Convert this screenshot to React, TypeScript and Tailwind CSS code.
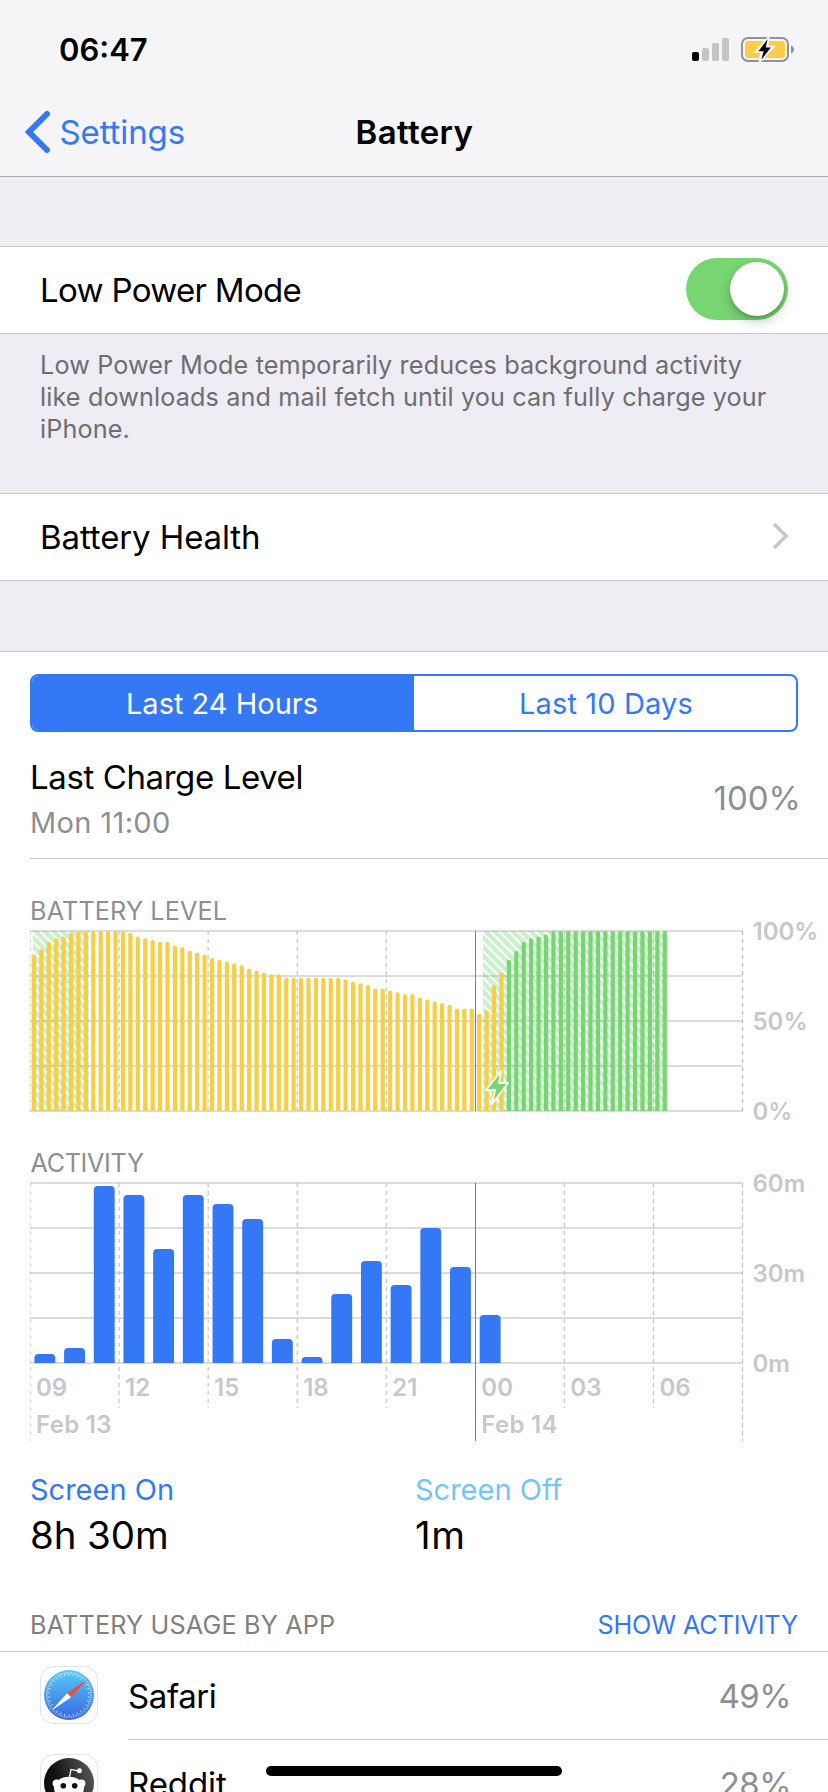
import type { ReactNode } from "react"

// one entry per 15 minutes, starting at 09:00
const levels = [
  87, 90, 94, 96, 97, 99, 100, 100, 100, 100, 100, 100, 100, 99, 97, 96, 95, 94, 94, 92, 91, 89, 88, 87, 85, 84, 83, 82,
  81, 79, 78, 77, 76, 76, 74, 74, 74, 74, 74, 74, 74, 74, 73, 72, 71, 70, 68, 68, 67, 66, 65, 65, 63, 62, 61, 60, 59, 57,
  57, 57, 54, 56, 70, 77, 84, 89, 94, 96, 97, 98, 100, 100, 100, 100, 100, 100, 100, 100, 100, 100, 100, 100, 100, 100,
  100, 100,
]
const LOW_POWER_END = 64

// minutes of use per hour, starting at 09:00
const activity = [3, 5, 59, 56, 38, 56, 53, 48, 8, 2, 23, 34, 26, 45, 32, 16]

const hours = ["09", "12", "15", "18", "21", "00", "03", "06"]
const STEP = 89.06
const MIDNIGHT = 5

const columns = [0, 1, 2, 3, 4, 5, 6, 7, 8]
const rows = [0, 1, 2, 3, 4]

const apps = [
  { name: "Safari", usage: "49%", icon: <SafariIcon />, tracking: "tracking-[-0.4px]" },
  { name: "Reddit", usage: "28%", icon: <RedditIcon />, tracking: "tracking-[-0.1px]" },
]

function SignalIcon() {
  return (
    <svg width="38" height="24" viewBox="0 0 38 24">
      <rect x="0" y="14" width="7" height="9" rx="2" fill="#000" />
      <rect x="10" y="10" width="7" height="13" rx="2" fill="#c4c4c4" />
      <rect x="20" y="5" width="7" height="18" rx="2" fill="#c4c4c4" />
      <rect x="30" y="0" width="7" height="23" rx="2" fill="#c4c4c4" />
    </svg>
  )
}

function ChargingIcon() {
  return (
    <svg width="54" height="26" viewBox="0 1 54 26">
      <rect x="1" y="2" width="46" height="23" rx="6" fill="none" stroke="#929294" strokeWidth="2" />
      <rect x="4" y="5" width="40" height="17" rx="3.5" fill="#f7ce46" />
      <path d="M50 9.5c4 1.2 4 6.8 0 8z" fill="#929294" />
      <path
        d="M26.8 2.8 15.6 15.2h5.2L19.4 24.4 31.4 11.2h-5.6z"
        fill="#f5f5f7"
        stroke="#f5f5f7"
        strokeWidth="3"
      />
      <path d="M26.6 3.3 17.4 15.2h5.2L20.4 23.8 29.8 11.4h-5.2z" fill="#000" />
    </svg>
  )
}

function SafariIcon() {
  const ticks = Array.from({ length: 60 }, (_, i) => i * 6)
  return (
    <svg width="58" height="58" viewBox="0 0 58 58">
      <defs>
        <linearGradient id="safari" x1="0" y1="0" x2="0" y2="1">
          <stop offset="0" stopColor="#5bcaf5" />
          <stop offset="1" stopColor="#3566e6" />
        </linearGradient>
      </defs>
      <rect x="0.5" y="0.5" width="57" height="57" rx="13" fill="#fff" stroke="#e3e3e5" />
      <circle cx="29" cy="29" r="25" fill="url(#safari)" />
      {ticks.map((a, i) => (
        <line
          key={a}
          x1="29"
          x2="29"
          y1="5.8"
          y2={i % 2 ? 8 : 10}
          stroke="#fff"
          strokeOpacity="0.75"
          strokeWidth="0.8"
          transform={`rotate(${a} 29 29)`}
        />
      ))}
      <path d="M47 13.5 27.1 27.2l4 4z" fill="#ea4e3d" />
      <path d="M11.5 44.5 27.1 27.2l4 4z" fill="#fff" />
    </svg>
  )
}

function RedditIcon() {
  return (
    <svg width="58" height="58" viewBox="0 0 58 58">
      <defs>
        <linearGradient id="reddit" x1="0" y1="0.6" x2="1" y2="0.3">
          <stop offset="0.25" stopColor="#101010" />
          <stop offset="1" stopColor="#55585a" />
        </linearGradient>
      </defs>
      <rect x="0.5" y="0.5" width="57" height="57" rx="13" fill="#fff" stroke="#e3e3e5" />
      <circle cx="29" cy="29" r="25" fill="url(#reddit)" />
      <path d="M29.3 24 31 15.4l7 1.4" fill="none" stroke="#fff" strokeWidth="1.3" />
      <circle cx="39.4" cy="16.8" r="2.5" fill="#fff" />
      <circle cx="16.6" cy="29.6" r="4" fill="#fff" />
      <circle cx="41.4" cy="29.6" r="4" fill="#fff" />
      <ellipse cx="29" cy="34" rx="15" ry="11.2" fill="#fff" />
      <circle cx="23.3" cy="31.8" r="2.8" fill="#111" />
      <circle cx="34.7" cy="31.8" r="2.8" fill="#111" />
    </svg>
  )
}

function GridRows() {
  return rows.map((r) => <rect key={r} x="0" y={r * 45} width={STEP * 8} height="2" fill="#8c8c8c" fillOpacity="0.3" />)
}

function AxisLabel({ x, y, children }: { x: number; y: number; children: ReactNode }) {
  return (
    <text x={x} y={y} fontSize="24" fontWeight="600" fill="#c7c7cc">
      {children}
    </text>
  )
}

// both charts reach 20px above and below their slot so the outer axis labels fit
function BatteryChart() {
  return (
    <svg width="798" height="222" viewBox="0 -20 798 222" className="-my-5">
      <defs>
        <pattern id="hatch" width="9" height="9" patternUnits="userSpaceOnUse">
          <rect width="9" height="9" fill="#c9f1cc" />
          <path d="M-2-2 11 11M-2 7l4 4M7-2l4 4" stroke="#fff" strokeWidth="2.1" />
        </pattern>
      </defs>
      <rect x="2.8" y="1" width="56.4" height="180" fill="url(#hatch)" />
      <rect x="453" y="1" width="184.6" height="180" fill="url(#hatch)" />
      <GridRows />
      {columns
        .filter((c) => c !== MIDNIGHT)
        .map((c) => (
          <line key={c} x1={c * STEP} x2={c * STEP} y1="1" y2="181" stroke="#b8b8b8" strokeDasharray="4 4" />
        ))}
      {levels.map((level, i) => (
        <path
          key={i}
          d={`M${1.8 + (i * STEP) / 12} 181v${-level * 1.8 + 2}a2.1 2 0 0 1 4.2 0v${level * 1.8 - 2}z`}
          fill={i < LOW_POWER_END ? "#f7ce46" : "#78d672"}
        />
      ))}
      <line x1="445.5" x2="445.5" y1="1" y2="181" stroke="#7d7d7d" />
      <path
        d="M471 141 456 160h9l-3 14 16-21h-9z"
        fill="#78d672"
        stroke="#fff"
        strokeWidth="1.8"
        strokeLinejoin="round"
      />
      <AxisLabel x={722.5} y={9.5}>100%</AxisLabel>
      <AxisLabel x={722.5} y={99.5}>50%</AxisLabel>
      <AxisLabel x={722.5} y={189.5}>0%</AxisLabel>
    </svg>
  )
}

function ActivityChart() {
  return (
    <svg width="798" height="300" viewBox="0 -20 798 300" className="-my-5">
      <GridRows />
      {columns
        .filter((c) => c !== MIDNIGHT)
        .map((c) => (
          <line
            key={c}
            x1={c * STEP}
            x2={c * STEP}
            y1="1"
            y2={c === 0 || c === 8 ? 259 : 226}
            stroke="#b8b8b8"
            strokeDasharray="4 4"
          />
        ))}
      {activity.map((minutes, i) => {
        const h = minutes * 3
        // the shortest bars have no room for the full corner
        const r = Math.min(4, h)
        return (
          <path
            key={i}
            d={`M${4.4 + (i * STEP) / 3} 181v${r - h}q0-${r} 4-${r}h12.9q4 0 4 ${r}v${h - r}z`}
            fill="#3478f6"
          />
        )
      })}
      <line x1="445.5" x2="445.5" y1="1" y2="259" stroke="#7d7d7d" />
      {hours.map((hour, i) => (
        <AxisLabel key={hour} x={i * STEP + 6} y={214}>
          {hour}
        </AxisLabel>
      ))}
      <g letterSpacing="0.3">
        <AxisLabel x={6} y={250.7}>Feb 13</AxisLabel>
        <AxisLabel x={451.3} y={250.7}>Feb 14</AxisLabel>
      </g>
      <AxisLabel x={722.5} y={10}>60m</AxisLabel>
      <AxisLabel x={722.5} y={100}>30m</AxisLabel>
      <AxisLabel x={722.5} y={190}>0m</AxisLabel>
    </svg>
  )
}

export default function App() {
  return (
    <div className="relative flex h-[1792px] w-[828px] flex-col overflow-hidden bg-[#eeedf3] font-[Inter,sans-serif] text-[33px] leading-[50px] text-black">
      <header className="h-[177px] shrink-0 border-b border-[#a9a9ae] bg-[#f5f5f7]">
        <div className="flex h-[88px] items-center justify-between pt-3 pr-[33px] pl-[59px]">
          <span className="text-[31px] font-semibold">06:47</span>
          <div className="flex items-center gap-[11px]">
            <SignalIcon />
            <ChargingIcon />
          </div>
        </div>
        <nav className="grid h-[88px] grid-cols-3 items-center">
          <a className="flex items-center gap-[8.5px] pl-[25px] text-[#3478f6]">
            <svg width="26" height="44" viewBox="0 0 26 44" className="shrink-0">
              <path d="M22 4 4 22l18 18" fill="none" stroke="#3478f6" strokeWidth="6" strokeLinecap="round" />
            </svg>
            <span className="tracking-[-0.1px]">Settings</span>
          </a>
          <h1 className="pl-px text-center font-semibold tracking-[0.37px]">Battery</h1>
        </nav>
      </header>

      <section className="mt-[69px] flex h-22 shrink-0 items-center justify-between border-y border-[#c8c7cc] bg-white pr-10 pl-10">
        <span className="tracking-[-0.68px]">Low Power Mode</span>
        <div className="mb-0.5 flex h-[62px] w-[102px] items-center justify-end rounded-full bg-[#78d672] pr-1">
          <div className="size-[54px] rounded-full bg-white shadow-[0_5px_12px_rgba(0,0,0,0.24),0_2px_2px_rgba(0,0,0,0.12)]" />
        </div>
      </section>
      <p className="h-[159px] shrink-0 pt-[15px] pl-10 text-[25.2px] leading-8 tracking-[0.135px] text-[#6d6d72]">
        Low Power Mode temporarily reduces background activity
        <br />
        like downloads and mail fetch until you can fully charge your
        <br />
        iPhone.
      </p>

      <section className="flex h-22 shrink-0 items-center justify-between border-y border-[#c8c7cc] bg-white pr-[38px] pl-10">
        <span className="tracking-[-0.11px]">Battery Health</span>
        <svg width="19" height="28" viewBox="0 0 19 28" className="mb-0.5">
          <path d="m3 2 12 12L3 26" fill="none" stroke="#c7c7cc" strokeWidth="3.6" />
        </svg>
      </section>

      <main className="mt-[70px] flex-1 border-t border-[#c8c7cc] bg-white pt-[22px]">
        <div className="mx-[30px] grid h-[58px] grid-cols-2 overflow-hidden rounded-lg border-2 border-[#3478f6] text-[29px] leading-[52px]">
          <button className="bg-[#3478f6] pt-0.5 pr-0.5 text-white">Last 24 Hours</button>
          <button className="pt-0.5 pl-0.5 tracking-[0.15px] text-[#3478f6]">Last 10 Days</button>
        </div>

        <div className="ml-[30px] flex h-[127px] justify-between border-b border-[#c8c7cc] pt-[23px] pr-[27px]">
          <div>
            <div className="leading-[44px] tracking-[-0.4px]">Last Charge Level</div>
            <div className="text-[29px] leading-[48px] tracking-[0.36px] text-[#8e8e93]">Mon 11:00</div>
          </div>
          <div className="leading-[86px] text-[#8e8e93]">100%</div>
        </div>

        <h2 className="flex h-[71px] items-end pl-[30px] text-[25.2px] leading-[38px] tracking-[0.15px] text-[#8e8e93]">
          BATTERY LEVEL
        </h2>
        <div className="flex flex-col pl-[30px]">
          <BatteryChart />
        </div>
        <h2 className="flex h-[70px] items-end pl-[30.5px] text-[25.2px] leading-[38px] tracking-[-0.35px] text-[#8e8e93]">
          ACTIVITY
        </h2>
        <div className="flex flex-col pl-[30px]">
          <ActivityChart />
        </div>

        <div className="grid grid-cols-2 px-[30px] pt-[27px]">
          <div>
            <div className="text-[29px] leading-[41px] text-[#3478f6]">Screen On</div>
            <div className="text-[38.5px] leading-[50px] tracking-[-0.1px]">8h 30m</div>
          </div>
          <div className="pl-px">
            <div className="text-[29px] leading-[41px] text-[#72c6f7]">Screen Off</div>
            <div className="text-[38.5px] leading-[50px] tracking-[0.5px]">1m</div>
          </div>
        </div>

        <div className="flex h-[92px] items-end justify-between border-b border-[#c8c7cc] pr-[30px] pl-[30px] text-[25.2px] leading-[52px]">
          <h2 className="tracking-[0.17px] text-[#808080]">BATTERY USAGE BY APP</h2>
          <button className="tracking-[-0.11px] text-[#3478f6]">SHOW ACTIVITY</button>
        </div>
        {apps.map((app) => (
          <div key={app.name} className="flex pl-10">
            <div className="flex h-[86px] w-[88px] items-center">{app.icon}</div>
            <div className="flex h-22 flex-1 items-center justify-between border-b border-[#c8c7cc] pt-px pr-[37px]">
              <span className={app.tracking}>{app.name}</span>
              <span className="tracking-[-0.6px] text-[#8e8e93]">{app.usage}</span>
            </div>
          </div>
        ))}
      </main>

      <div className="absolute bottom-4 left-[266px] h-2.5 w-[296px] rounded-full bg-black" />
    </div>
  )
}
